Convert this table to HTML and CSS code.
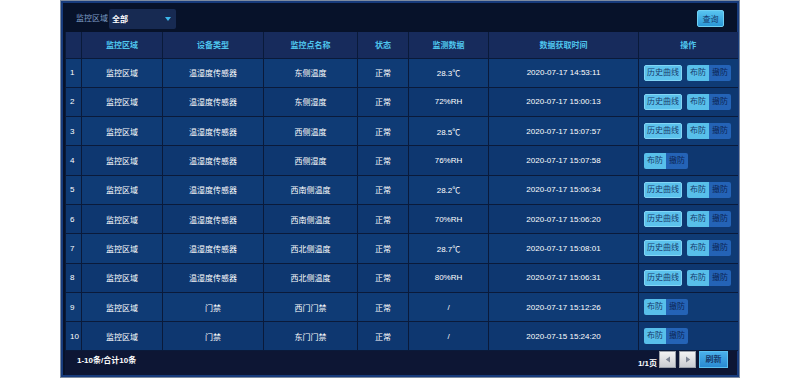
FILE: index.html
```html
<!DOCTYPE html>
<html lang="zh-CN">
<head>
<meta charset="utf-8">
<title>监控</title>
<link rel="stylesheet" href="styles.css">
</head>
<body>
<div class="panel">
  <div class="toolbar">
    <span class="label">监控区域</span>
    <div class="select"><span>全部</span><span class="caret"></span></div>
    <span class="spacer"></span>
    <button class="btn-query">查询</button>
  </div>
  <table class="grid">
    <colgroup>
      <col class="c-idx"><col class="c-area"><col class="c-type"><col class="c-name"><col class="c-state"><col class="c-data"><col class="c-time"><col class="c-op">
    </colgroup>
    <thead>
      <tr><th></th><th>监控区域</th><th>设备类型</th><th>监控点名称</th><th>状态</th><th>监测数据</th><th>数据获取时间</th><th>操作</th></tr>
    </thead>
    <tbody>
      <tr><td class="idx">1</td><td>监控区域</td><td>温湿度传感器</td><td>东侧温度</td><td>正常</td><td>28.3℃</td><td>2020-07-17 14:53:11</td><td class="op"><span class="btn-hist">历史曲线</span><span class="toggle"><span class="on">布防</span><span class="off">撤防</span></span></td></tr>
      <tr><td class="idx">2</td><td>监控区域</td><td>温湿度传感器</td><td>东侧湿度</td><td>正常</td><td>72%RH</td><td>2020-07-17 15:00:13</td><td class="op"><span class="btn-hist">历史曲线</span><span class="toggle"><span class="on">布防</span><span class="off">撤防</span></span></td></tr>
      <tr><td class="idx">3</td><td>监控区域</td><td>温湿度传感器</td><td>西侧温度</td><td>正常</td><td>28.5℃</td><td>2020-07-17 15:07:57</td><td class="op"><span class="btn-hist">历史曲线</span><span class="toggle"><span class="on">布防</span><span class="off">撤防</span></span></td></tr>
      <tr><td class="idx">4</td><td>监控区域</td><td>温湿度传感器</td><td>西侧湿度</td><td>正常</td><td>76%RH</td><td>2020-07-17 15:07:58</td><td class="op"><span class="toggle"><span class="on">布防</span><span class="off">撤防</span></span></td></tr>
      <tr><td class="idx">5</td><td>监控区域</td><td>温湿度传感器</td><td>西南侧温度</td><td>正常</td><td>28.2℃</td><td>2020-07-17 15:06:34</td><td class="op"><span class="btn-hist">历史曲线</span><span class="toggle"><span class="on">布防</span><span class="off">撤防</span></span></td></tr>
      <tr><td class="idx">6</td><td>监控区域</td><td>温湿度传感器</td><td>西南侧温度</td><td>正常</td><td>70%RH</td><td>2020-07-17 15:06:20</td><td class="op"><span class="btn-hist">历史曲线</span><span class="toggle"><span class="on">布防</span><span class="off">撤防</span></span></td></tr>
      <tr><td class="idx">7</td><td>监控区域</td><td>温湿度传感器</td><td>西北侧温度</td><td>正常</td><td>28.7℃</td><td>2020-07-17 15:08:01</td><td class="op"><span class="btn-hist">历史曲线</span><span class="toggle"><span class="on">布防</span><span class="off">撤防</span></span></td></tr>
      <tr><td class="idx">8</td><td>监控区域</td><td>温湿度传感器</td><td>西北侧温度</td><td>正常</td><td>80%RH</td><td>2020-07-17 15:06:31</td><td class="op"><span class="btn-hist">历史曲线</span><span class="toggle"><span class="on">布防</span><span class="off">撤防</span></span></td></tr>
      <tr><td class="idx">9</td><td>监控区域</td><td>门禁</td><td>西门门禁</td><td>正常</td><td>/</td><td>2020-07-17 15:12:26</td><td class="op"><span class="toggle"><span class="on">布防</span><span class="off">撤防</span></span></td></tr>
      <tr><td class="idx">10</td><td>监控区域</td><td>门禁</td><td>东门门禁</td><td>正常</td><td>/</td><td>2020-07-15 15:24:20</td><td class="op"><span class="toggle"><span class="on">布防</span><span class="off">撤防</span></span></td></tr>
    </tbody>
  </table>
  <div class="footer">
    <span class="total">1-10条/合计10条</span>
    <span class="spacer"></span>
    <span class="pages">1/1页</span>
    <span class="pg-btn"><svg width="6" height="7" viewBox="0 0 6 7"><path d="M5 0.5 L0.8 3.5 L5 6.5 Z" fill="#7c8494"/></svg></span>
    <span class="pg-btn"><svg width="6" height="7" viewBox="0 0 6 7"><path d="M1 0.5 L5.2 3.5 L1 6.5 Z" fill="#7c8494"/></svg></span>
    <span class="btn-refresh">刷新</span>
  </div>
</div>
</body>
</html>
```
FILE: styles.css
```css
* { box-sizing: border-box; }
html, body { margin: 0; padding: 0; background: #ffffff; }
body {
  font-family: "Liberation Sans", "Noto Sans CJK SC", sans-serif;
  font-size: 8px;
  color: #ffffff;
}
.panel {
  margin-left: 60px;
  width: 680px;
  height: 378px;
  border: 1px solid #7e8ba0;
  box-shadow: inset 0 0 0 2px #173b7c;
  background: #07122a;
  padding: 2px 2px 2px 4px;
  display: flex;
  flex-direction: column;
}
.toolbar {
  height: 29px;
  flex: none;
  display: flex;
  align-items: center;
  padding-left: 11px;
  padding-right: 13px;
}
.label { color: #7d9cc4; font-size: 8px; width: 33px; }
.select {
  width: 67px;
  height: 20px;
  background: #172a52;
  border-radius: 2px;
  display: flex;
  align-items: center;
  justify-content: space-between;
  padding: 0 5px 0 3px;
  font-weight: bold;
  color: #ffffff;
  margin-top: 2px;
}
.caret {
  width: 0; height: 0;
  border-left: 3px solid transparent;
  border-right: 3px solid transparent;
  border-top: 4px solid #3cb8ec;
}
.spacer { flex: 1; }
.btn-query {
  width: 27px;
  height: 17px;
  border: 1px solid #6fd0f4;
  border-radius: 2px;
  background: linear-gradient(#58c4f0, #2a96d6);
  color: #163a6c;
  font-family: "Liberation Sans", "Noto Sans CJK SC", sans-serif;
  font-size: 8px;
  padding: 0;
  margin-top: 1px;
}
.grid {
  width: 672px;
  flex: none;
  border-collapse: collapse;
  table-layout: fixed;
}
.c-idx { width: 16px; }
.c-area { width: 81px; }
.c-type { width: 101px; }
.c-name { width: 94px; }
.c-state { width: 51px; }
.c-data { width: 80px; }
.c-time { width: 150px; }
.c-op { width: 99px; }
.grid th, .grid td {
  border: 1px solid #0a1a3a;
  text-align: center;
  padding: 0;
  font-size: 8px;
  white-space: nowrap;
}
.grid th {
  height: 26px;
  background: #172b5c;
  color: #4fc6ee;
  font-weight: bold;
}
.grid thead tr th { border-top: none; }
.grid tr > :last-child { border-right: none; }
.grid td {
  height: 29.3px;
  background: #0f3b75;
  color: #ffffff;
}
.grid tbody tr:nth-child(even) td { background: #0e3770; }
.grid td.idx { text-align: left; padding-left: 4px; }
.grid td.op { text-align: left; padding-left: 5px; }
.btn-hist {
  display: inline-block;
  width: 38px;
  height: 16px;
  line-height: 14px;
  text-align: center;
  background: #5cc2ec;
  border: 1px solid #82d6f6;
  border-radius: 2px;
  color: #183a6c;
  vertical-align: middle;
  margin-right: 5px;
}
.toggle {
  display: inline-flex;
  height: 16px;
  border-radius: 2px;
  overflow: hidden;
  vertical-align: middle;
}
.toggle span {
  width: 22px;
  line-height: 16px;
  text-align: center;
}
.toggle .on { background: #58bfea; color: #163a6c; }
.toggle .off { background: #2463b6; color: #0c2656; }
.footer {
  height: 24px;
  flex: none;
  background: #0d1634;
  display: flex;
  align-items: flex-start;
  padding-left: 12px;
  padding-right: 9px;
}
.total { font-weight: bold; margin-top: 3px; }
.pages { font-weight: bold; margin-top: 6px; margin-right: 2px; }
.pg-btn {
  width: 17px;
  height: 17px;
  background: linear-gradient(#f2f2f2, #c9ccd2);
  border: 1px solid #9aa0aa;
  display: flex;
  align-items: center;
  justify-content: center;
  margin-right: 3px;
}
.btn-refresh {
  width: 29px;
  height: 17px;
  line-height: 15px;
  text-align: center;
  background: linear-gradient(#4ab0ea, #2a8ad2);
  border: 1px solid #5cc0f0;
  color: #163a6c;
  font-weight: bold;
}
```
